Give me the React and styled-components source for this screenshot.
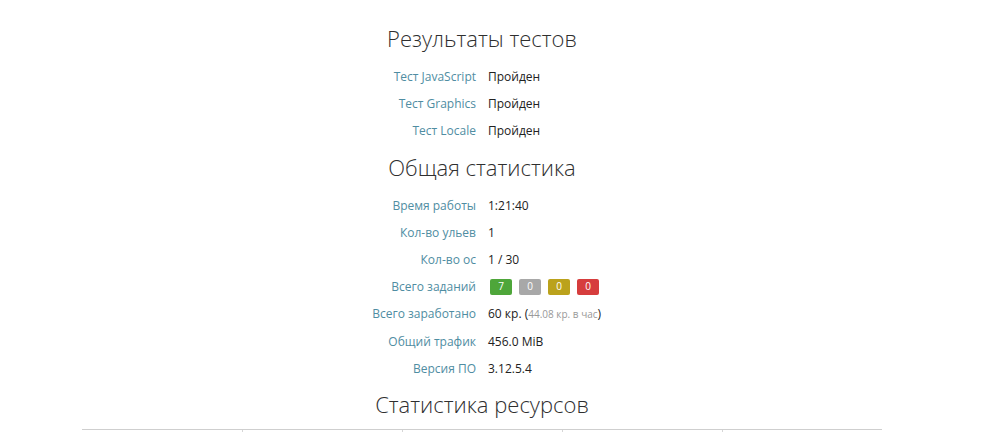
import React from 'react';
import styled, { createGlobalStyle } from 'styled-components';

const GlobalStyle = createGlobalStyle`
  html, body {
    margin: 0;
    padding: 0;
    background: #fff;
  }
  body {
    font-family: "Open Sans", "Noto Sans", "DejaVu Sans", sans-serif;
    color: #333;
  }
`;

const Page = styled.div`
  width: 800px;
  margin-left: 82px;
  padding-top: 15px;
`;

const Title = styled.h2`
  margin: ${(p) => (p.last ? '7px 0 10px' : '8px 0 10px')};
  font-size: 22px;
  line-height: 30px;
  font-weight: 300;
  color: #2f2f2f;
  text-align: center;
`;

const List = styled.dl`
  margin: 0;
  display: grid;
  grid-template-columns: 394px 1fr;
  column-gap: 12px;
`;

const Label = styled.dt`
  text-align: right;
  font-size: 12px;
  line-height: 27px;
  color: #4f8da2;
`;

const Value = styled.dd`
  margin: 0;
  font-size: 12px;
  line-height: 27px;
  color: #222;
  display: flex;
  align-items: center;
  gap: 7px;
`;

const Badges = styled(Value)`
  padding-left: 2px;
`;

const Muted = styled.span`
  font-size: 10px;
  color: #999;
`;

const colors = {
  success: '#4ea63a',
  muted: '#a8a8a8',
  warning: '#bba21c',
  danger: '#d63d3d'
};

const Badge = styled.span`
  display: inline-flex;
  align-items: center;
  justify-content: center;
  width: 22px;
  height: 16px;
  border-radius: 2px;
  font-size: 10px;
  color: #fff;
  background: ${(p) => colors[p.kind]};
`;

const Table = styled.div`
  margin-top: 7px;
  display: grid;
  grid-template-columns: repeat(5, 1fr);
  border-top: 1px solid #cfcfcf;
  height: 20px;
`;

const Cell = styled.div`
  border-left: ${(p) => (p.first ? 'none' : '1px solid #d6d6d6')};
`;

const tests = ['Тест JavaScript', 'Тест Graphics', 'Тест Locale'];

function App() {
  return (
    <Page>
      <GlobalStyle />
      <Title>Результаты тестов</Title>
      <List>
        {tests.map((t) => (
          <React.Fragment key={t}>
            <Label>{t}</Label>
            <Value>Пройден</Value>
          </React.Fragment>
        ))}
      </List>
      <Title>Общая статистика</Title>
      <List>
        <Label>Время работы</Label>
        <Value>1:21:40</Value>
        <Label>Кол-во ульев</Label>
        <Value>1</Value>
        <Label>Кол-во ос</Label>
        <Value>1 / 30</Value>
        <Label>Всего заданий</Label>
        <Badges>
          <Badge kind="success">7</Badge>
          <Badge kind="muted">0</Badge>
          <Badge kind="warning">0</Badge>
          <Badge kind="danger">0</Badge>
        </Badges>
        <Label>Всего заработано</Label>
        <Value>
          <span>60 кр. (<Muted>44.08 кр. в час</Muted>)</span>
        </Value>
        <Label>Общий трафик</Label>
        <Value>456.0 MiB</Value>
        <Label>Версия ПО</Label>
        <Value>3.12.5.4</Value>
      </List>
      <Title last>Статистика ресурсов</Title>
      <Table>
        {[0, 1, 2, 3, 4].map((i) => (
          <Cell key={i} first={i === 0} />
        ))}
      </Table>
    </Page>
  );
}

export default App;
